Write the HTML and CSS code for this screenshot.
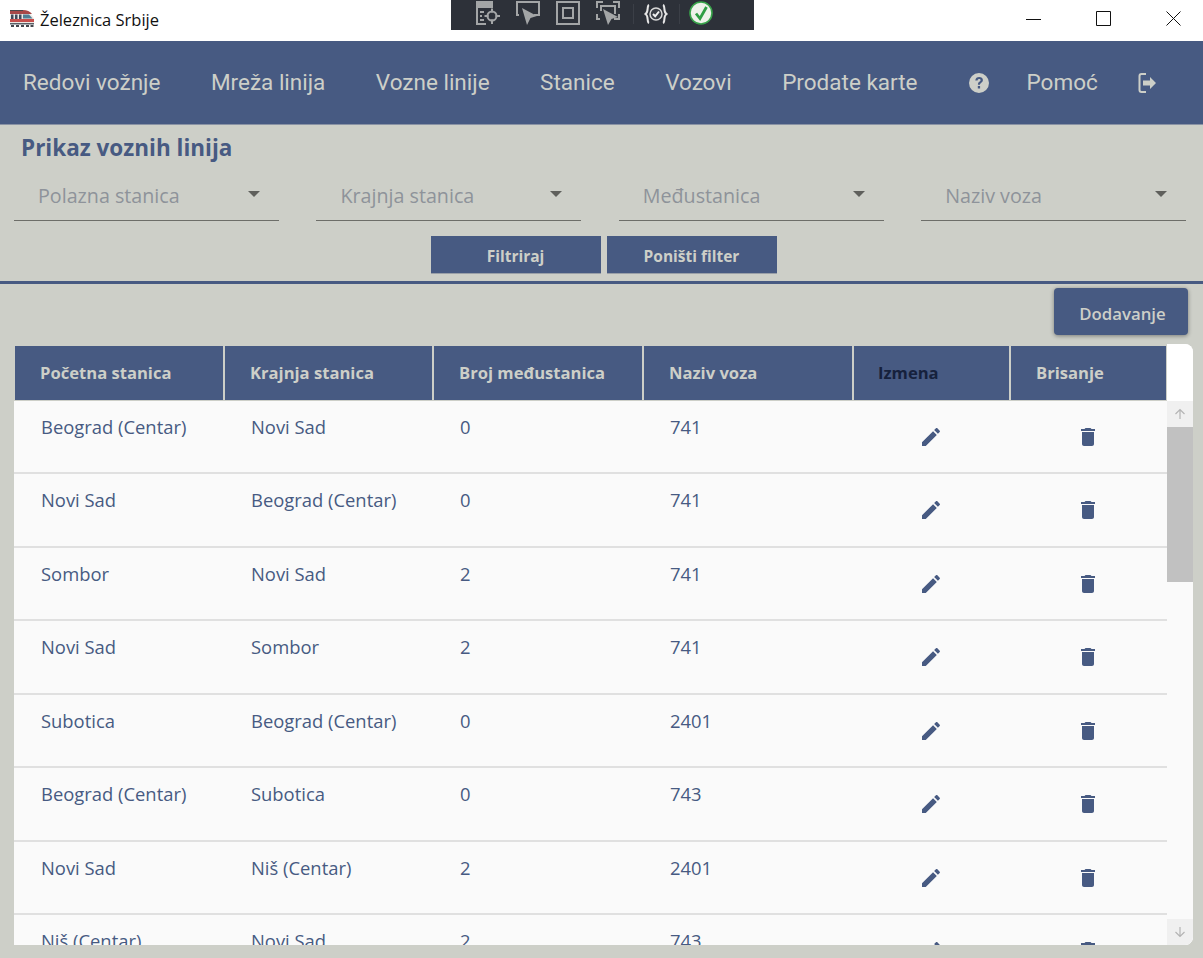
FILE: index.html
```html
<!DOCTYPE html>
<html lang="en">
<head>
    <meta charset="UTF-8">
    <meta name="viewport" content="width=device-width, initial-scale=1.0">
    <title>Železnica Srbije</title>
    <link rel="stylesheet" href="styles.css">
</head>
<body>
    <div class="titlebar">
        <div class="app-title">
            <svg class="app-icon" viewBox="0 0 24 18">
                <path d="M0 1h13c5 0 9 3.500 11 8v4H0z" fill="#ece9e4"/>
                <path d="M0 0h13c4 0 7 1.500 9 4H0z" fill="#a84848"/>
                <path d="M0 0h13v1H0z" fill="#4c4a4c"/>
                <path d="M0 9h24v3H0z" fill="#c84f4d"/>
                <path d="M1 4.500h2.500V9H1zM5 4.500h2.500V9H5zM9 4.500h2.500V9H9z" fill="#3f4a5c"/>
                <path d="M13 4.500h6l3.500 4H13z" fill="#4f7f96"/>
                <path d="M0 13h24v1.500H0z" fill="#5a6068"/>
                <path d="M1 15h3v2H1zM6 15h3v2H6zM11 15h3v2h-3zM16 15h3v2h-3zM20.500 15h3v2h-3z" fill="#44484e"/>
            </svg>
            <span>Železnica Srbije</span>
        </div>
        <div class="window-controls">
            <svg viewBox="0 0 15 15"><path d="M0 8.500h15" stroke="#111" fill="none"/></svg>
            <svg viewBox="0 0 15 15"><path d="M.5.500h14v14H.5z" stroke="#111" fill="none"/></svg>
            <svg viewBox="0 0 15 15"><path d="M.5.500l14 14M14.500.500l-14 14" stroke="#111" fill="none"/></svg>
        </div>
        <div class="debug-bar">
            <svg class="dbg dbg-1" viewBox="0 0 24 24" fill="none" stroke="#a3a5a6" stroke-width="2">
                <path d="M1 1h15v5H1zM1 6v17h9"/>
                <path d="M1 2h15v3H1z" fill="#a3a5a6"/>
                <path d="M4 11h4M4 15h2M4 19h4"/>
                <circle cx="16" cy="15" r="4.500"/>
                <path d="M16 7.500v4M16 18.500v4.500M8.500 15h4M19.500 15H24"/>
            </svg>
            <svg class="dbg dbg-2" viewBox="0 0 24 24" fill="none" stroke="#a3a5a6" stroke-width="2">
                <path d="M3 14H1V1h22v13h-5"/>
                <path d="M6 7l15 8-6.500 2-3.500 7z" fill="#a3a5a6" stroke="none"/>
            </svg>
            <svg class="dbg dbg-3" viewBox="0 0 24 24" fill="none" stroke="#a3a5a6" stroke-width="2">
                <path d="M1 1h22v22H1z"/>
                <path d="M7 7h10v10H7z"/>
            </svg>
            <svg class="dbg dbg-4" viewBox="0 0 24 24" fill="none" stroke="#a3a5a6" stroke-width="2">
                <path d="M1 7V1h6M17 1h6v6M1 13v5h3M23 13v5h-5"/>
                <path d="M5 10V5h14v8"/>
                <path d="M7 8l15 8-6.500 2-3.500 6z" fill="#a3a5a6" stroke="none"/>
            </svg>
            <span class="dbg-sep"></span>
            <svg class="dbg dbg-5" viewBox="0 0 24 24" fill="none" stroke="#e6e6e6" stroke-width="2">
                <path d="M5 3C2.500 4 5 10 1.500 12 5 14 2.500 20 5 21"/>
                <path d="M19 3c2.500 1 0 7 3.500 9-3.500 2-1 8-3.500 9"/>
                <circle cx="12" cy="12" r="6" fill="#3a3e45" stroke="#d8d8d8" stroke-width="1.500"/>
                <path d="M9 12l2.200 2.300L15 9.500" stroke="#f2f2f2"/>
            </svg>
            <span class="dbg-sep"></span>
            <svg class="dbg dbg-6" viewBox="0 0 24 24">
                <circle cx="12" cy="12" r="11" fill="#eef2ea" stroke="#37a349" stroke-width="1.600"/>
                <path d="M7 12.500l4 5L17.500 6" fill="none" stroke="#2f9e44" stroke-width="2.800"/>
            </svg>
        </div>
    </div>

    <nav class="nav">
        <a class="nav-link">Redovi vožnje</a>
        <a class="nav-link">Mreža linija</a>
        <a class="nav-link">Vozne linije</a>
        <a class="nav-link">Stanice</a>
        <a class="nav-link">Vozovi</a>
        <a class="nav-link">Prodate karte</a>
        <svg class="help-icon" viewBox="0 0 20 20">
            <path fill-rule="evenodd" d="M10 0a10 10 0 1 0 0 20 10 10 0 0 0 0-20zM6.300 7.400C6.500 5.200 8 4 10.200 4c2.100 0 3.700 1.200 3.700 3.100 0 1.400-.8 2.200-1.800 2.800-.9.600-1.100.9-1.100 1.800H8.900c0-1.700.5-2.400 1.500-3 .8-.5 1.200-.9 1.200-1.500s-.6-1.100-1.400-1.100c-.9 0-1.500.5-1.600 1.500zM8.800 13h2.300v2.400H8.800z" fill="#cdcfc8"/>
        </svg>
        <a class="nav-link help-link">Pomoć</a>
        <svg class="exit-icon" viewBox="0 0 18 20" fill="#cdcfc8">
            <path d="M8 2H3.500a1 1 0 0 0-1 1v14a1 1 0 0 0 1 1H8v2H3.500a3 3 0 0 1-3-3V3a3 3 0 0 1 3-3H8z"/>
            <path d="M5 7.500h7V4l6 6-6 6v-3.500H5z"/>
        </svg>
    </nav>

    <section class="filters">
        <h1 class="page-title">Prikaz voznih linija</h1>
        <div class="filter-row">
            <div class="select"><span>Polazna stanica</span><i class="caret"></i></div>
            <div class="select"><span>Krajnja stanica</span><i class="caret"></i></div>
            <div class="select"><span>Međustanica</span><i class="caret"></i></div>
            <div class="select"><span>Naziv voza</span><i class="caret"></i></div>
        </div>
        <div class="filter-actions">
            <button class="btn">Filtriraj</button>
            <button class="btn">Poništi filter</button>
        </div>
    </section>

    <div class="add-row">
        <button class="btn-add">Dodavanje</button>
    </div>

    <div class="card">
        <div class="table">
            <div class="thead">
                <div class="th">Početna stanica</div>
                <div class="th">Krajnja stanica</div>
                <div class="th">Broj međustanica</div>
                <div class="th">Naziv voza</div>
                <div class="th th-dark">Izmena</div>
                <div class="th">Brisanje</div>
            </div>
            <div class="tbody" id="rows"></div>
        </div>
        <div class="scrollbar">
            <div class="scroll-btn"><svg viewBox="0 0 12 12"><path d="M6 11V1.500M1.500 6L6 1.500 10.500 6" fill="none" stroke="#b4b4b4" stroke-width="1.200"/></svg></div>
            <div class="scroll-track"><div class="scroll-thumb"></div></div>
            <div class="scroll-btn"><svg viewBox="0 0 12 12"><path d="M6 1v9.500M1.500 6L6 10.500 10.500 6" fill="none" stroke="#b4b4b4" stroke-width="1.200"/></svg></div>
        </div>
    </div>

    <script>
        // Example data for voznih linija
        const lines = [
            ['Beograd (Centar)', 'Novi Sad', '0', '741'],
            ['Novi Sad', 'Beograd (Centar)', '0', '741'],
            ['Sombor', 'Novi Sad', '2', '741'],
            ['Novi Sad', 'Sombor', '2', '741'],
            ['Subotica', 'Beograd (Centar)', '0', '2401'],
            ['Beograd (Centar)', 'Subotica', '0', '743'],
            ['Novi Sad', 'Niš (Centar)', '2', '2401'],
            ['Niš (Centar)', 'Novi Sad', '2', '743']
        ];

        const pencil = '<svg class="row-icon" viewBox="0 0 24 24"><path d="M3 17.250V21h3.750L17.810 9.940l-3.750-3.750L3 17.250zM20.710 7.040c.39-.39.39-1.020 0-1.410l-2.340-2.340c-.39-.39-1.020-.39-1.410 0l-1.830 1.830 3.750 3.750 1.830-1.830z"/></svg>';
        const trash = '<svg class="row-icon" viewBox="0 0 24 24"><path d="M6 19c0 1.100.9 2 2 2h8c1.100 0 2-.9 2-2V7H6v12zM19 4h-3.500l-1-1h-5l-1 1H5v2h14V4z"/></svg>';

        const rows = document.getElementById('rows');
        lines.forEach(line => {
            const row = document.createElement('div');
            row.className = 'tr';
            line.forEach(text => {
                const cell = document.createElement('div');
                cell.className = 'td';
                cell.textContent = text;
                row.appendChild(cell);
            });
            row.insertAdjacentHTML('beforeend', '<div class="td-icon">' + pencil + '</div><div class="td-icon">' + trash + '</div>');
            rows.appendChild(row);
        });
    </script>
</body>
</html>
```

FILE: styles.css
```css
html, body {
    height: 100%;
}
body {
    margin: 0;
    height: 958px;
    overflow: hidden;
    background-color: #cdcfc8;
    font-family: "Open Sans", sans-serif;
    color: #475a82;
}
svg {
    display: block;
    flex: none;
}

/* window title bar */
.titlebar {
    position: relative;
    display: flex;
    justify-content: space-between;
    align-items: center;
    height: 41px;
    background-color: #fff;
}
.app-title {
    display: flex;
    align-items: center;
    gap: 6px;
    padding: 0 0 3px 10px;
    font-size: 16.5px;
    color: #111;
}
.app-icon {
    width: 24px;
    height: 18px;
}
.window-controls {
    display: flex;
    gap: 55px;
    padding: 0 22px 5px 0;
}
.window-controls svg {
    width: 15px;
    height: 15px;
}
.debug-bar {
    position: absolute;
    left: 451px;
    top: 0;
    width: 303px;
    height: 30px;
    background-color: #2d3139;
}
.dbg {
    position: absolute;
    top: 1px;
    width: 24px;
    height: 24px;
}
.dbg-1 { left: 25px; }
.dbg-2 { left: 65px; }
.dbg-3 { left: 105px; }
.dbg-4 { left: 145px; }
.dbg-5 { left: 193px; top: 2px; }
.dbg-6 { left: 238px; }
.dbg-sep {
    position: absolute;
    top: 4px;
    width: 1px;
    height: 20px;
    background-color: #3b3f47;
}
.dbg-sep:nth-of-type(1) { left: 182px; }
.dbg-sep:nth-of-type(2) { left: 228px; }

/* nav */
.nav {
    display: flex;
    align-items: center;
    gap: 50.5px;
    height: 84px;
    padding: 0 0 2px 23px;
    box-sizing: border-box;
    background-color: #475a82;
    border-bottom: 1px solid #8a93a5;
}
.nav-link {
    font-family: Roboto, sans-serif;
    font-size: 22.5px;
    color: #cdcfc8;
}
.help-icon {
    width: 20px;
    height: 20px;
    margin: 2px 0 0 1px;
}
.help-link {
    margin-left: -13px;
}
.exit-icon {
    width: 18px;
    height: 20px;
    margin: 2px 0 0 -10.5px;
}

/* filters */
.filters {
    height: 159px;
    box-sizing: border-box;
    padding-top: 9px;
    border-bottom: 3px solid #475a82;
}
.page-title {
    margin: 0 0 0 21px;
    font-size: 22.5px;
    line-height: 28px;
    font-weight: 700;
    color: #475a82;
}
.filter-row {
    display: grid;
    grid-template-columns: repeat(4, 265px);
    column-gap: 37.4px;
    padding-left: 14px;
    margin-top: 11px;
}
.select {
    display: flex;
    justify-content: space-between;
    align-items: center;
    height: 48px;
    box-sizing: border-box;
    padding: 0 19px 2px 24px;
    border-bottom: 1px solid #6d6e69;
    font-size: 19.7px;
    color: #8e939a;
}
.caret {
    width: 0;
    height: 0;
    margin-bottom: 4px;
    border-left: 6px solid transparent;
    border-right: 6px solid transparent;
    border-top: 6px solid #5f605c;
}
.filter-actions {
    display: flex;
    justify-content: center;
    gap: 6px;
    margin: 15px 0 0 4px;
}
.btn {
    width: 170px;
    height: 38px;
    padding: 3px 0 0;
    border: none;
    border-bottom: 1px solid #9aa0a8;
    background-color: #475a82;
    color: #cdcfc8;
    font-family: "Open Sans", sans-serif;
    font-size: 15.5px;
    font-weight: 700;
}

/* add button */
.add-row {
    display: flex;
    justify-content: flex-end;
    padding: 4px 15px 0 0;
}
.btn-add {
    width: 134px;
    height: 47px;
    padding: 3px 0 0 3px;
    border: none;
    border-radius: 4px;
    background-color: #475a82;
    color: #cdcfc8;
    font-family: "Open Sans", sans-serif;
    font-size: 16.8px;
    font-weight: 600;
    box-shadow: 0 1px 4px rgba(0, 0, 0, 0.4);
}

/* table card */
.card {
    display: flex;
    width: 1179px;
    height: 601px;
    margin: 9px 0 0 14px;
    overflow: hidden;
    border-radius: 0 8px 8px 0;
    background-color: #fafafa;
}
.table {
    display: flex;
    flex-direction: column;
    width: 1153px;
    overflow: hidden;
}
.thead {
    display: grid;
    grid-template-columns: 208px 207px 208px 208px 155px 155px;
    grid-template-rows: 54px;
    column-gap: 2px;
    height: 56.5px;
    flex: none;
    padding: 2px 0 0 1px;
    box-sizing: border-box;
    background-color: #cdcfc8;
}
.th {
    padding: 0 0 0 25px;
    background-color: #475a82;
    color: #cdcfc8;
    font-size: 16.6px;
    font-weight: 700;
    line-height: 54px;
}
.th-dark {
    color: #16213c;
    padding-left: 24px;
}
.tr {
    display: grid;
    grid-template-columns: 210px 209px 210px 210px 156px 158px;
    height: 73.5px;
    box-sizing: border-box;
    border-bottom: 2px solid #e0e0e0;
}
.td {
    padding: 13px 0 0 27px;
    font-size: 18.4px;
    line-height: 26px;
    color: #475a82;
}
.td-icon {
    display: flex;
    justify-content: center;
    padding-top: 24px;
}
.row-icon {
    width: 24px;
    height: 24px;
    fill: #475a82;
}

/* scrollbar */
.scrollbar {
    display: flex;
    flex-direction: column;
    width: 26px;
    padding-top: 57px;
    box-sizing: border-box;
    background-color: #fff;
}
.scroll-btn {
    display: flex;
    justify-content: center;
    align-items: center;
    height: 26px;
    flex: none;
    background-color: #f0f0f0;
}
.scroll-btn svg {
    width: 12px;
    height: 12px;
}
.scroll-track {
    flex: 1;
    background-color: #fafafa;
}
.scroll-thumb {
    height: 155px;
    background-color: #c1c1c1;
}
```
